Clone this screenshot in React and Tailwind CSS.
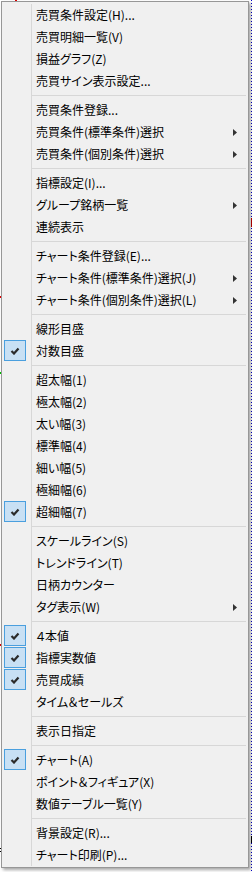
const groups = [
  [
    { t: "売買条件設定(H)..." },
    { t: "売買明細一覧(V)" },
    { t: "損益グラフ(Z)" },
    { t: "売買サイン表示設定..." },
  ],
  [
    { t: "売買条件登録..." },
    { t: "売買条件(標準条件)選択", sub: true },
    { t: "売買条件(個別条件)選択", sub: true },
  ],
  [{ t: "指標設定(I)..." }, { t: "グループ銘柄一覧", sub: true }, { t: "連続表示" }],
  [
    { t: "チャート条件登録(E)..." },
    { t: "チャート条件(標準条件)選択(J)", sub: true },
    { t: "チャート条件(個別条件)選択(L)", sub: true },
  ],
  [{ t: "線形目盛" }, { t: "対数目盛", on: true }],
  [
    { t: "超太幅(1)" },
    { t: "極太幅(2)" },
    { t: "太い幅(3)" },
    { t: "標準幅(4)" },
    { t: "細い幅(5)" },
    { t: "極細幅(6)" },
    { t: "超細幅(7)", on: true },
  ],
  [
    { t: "スケールライン(S)" },
    { t: "トレンドライン(T)" },
    { t: "日柄カウンター" },
    { t: "タグ表示(W)", sub: true },
  ],
  [
    { t: "４本値", on: true },
    { t: "指標実数値", on: true },
    { t: "売買成績", on: true },
    { t: "タイム＆セールズ" },
  ],
  [{ t: "表示日指定" }],
  [{ t: "チャート(A)", on: true }, { t: "ポイント＆フィギュア(X)" }, { t: "数値テーブル一覧(Y)" }],
  [{ t: "背景設定(R)..." }, { t: "チャート印刷(P)..." }],
];

function Check() {
  return (
    <div className="ml-[2px] h-[21px] w-[22px] border border-[#4a9fde] bg-[#c8e0f4] flex items-center justify-center">
      <svg width="10" height="8" viewBox="0 0 10 8">
        <path d="M1.5 4 L4 6.5 L8.5 1.5" fill="none" stroke="#2b2b2b" strokeWidth="2.2" />
      </svg>
    </div>
  );
}

function Item({ t, sub, on }) {
  return (
    <div className="flex h-[22px]">
      <div className="w-[30px] shrink-0 border-r border-[#d7d7d7] flex items-start">
        {on && <Check />}
      </div>
      <div className="flex-1 pl-[4px] flex items-center whitespace-nowrap">{t}</div>
      {sub && (
        <div className="w-[15px] flex items-center">
          <svg width="4" height="7" viewBox="0 0 4 7">
            <path d="M0 0 L4 3.5 L0 7 Z" fill="#333" />
          </svg>
        </div>
      )}
    </div>
  );
}

function Separator() {
  return (
    <div className="flex h-[7px]">
      <div className="w-[30px] shrink-0 border-r border-[#d7d7d7]" />
      <div className="flex-1 mr-[2px] flex items-center">
        <div className="h-px w-full bg-[#d7d7d7]" />
      </div>
    </div>
  );
}

export default function App() {
  return (
    <div className="relative w-[252px] h-[872px] bg-white overflow-hidden">
      <svg className="absolute inset-0" width="252" height="872">
        <line x1="251.5" y1="0" x2="251.5" y2="872" stroke="#0000c8" strokeDasharray="1 2" />
        <rect x="15" y="0" width="2" height="1" fill="#e00000" />
        <rect x="0" y="296" width="1" height="2" fill="#e00000" />
        <rect x="0" y="372" width="1" height="2" fill="#00c000" />
        <rect x="0" y="644" width="1" height="2" fill="#e00000" />
        <rect x="0" y="848" width="1" height="1" fill="#000" />
        <rect x="0" y="851" width="1" height="1" fill="#000" />
        <rect x="251" y="218" width="1" height="9" fill="#c00000" />
        <rect x="251" y="836" width="1" height="7" fill="#000" />
      </svg>
      <div
        className="absolute left-[1px] top-[1px] w-[248px] border border-[#979797] bg-[#f0f0f0] pt-[2px] pb-[1px] text-[12px] leading-none text-black shadow-[2px_2px_3px_rgba(0,0,0,0.35)] [font-feature-settings:'palt']"
        style={{ fontFamily: '"Noto Sans CJK JP", "Noto Sans", sans-serif' }}
      >
        {groups.map((g, i) => (
          <div key={i}>
            {i > 0 && <Separator />}
            {g.map((it) => (
              <Item key={it.t} {...it} />
            ))}
          </div>
        ))}
      </div>
    </div>
  );
}
